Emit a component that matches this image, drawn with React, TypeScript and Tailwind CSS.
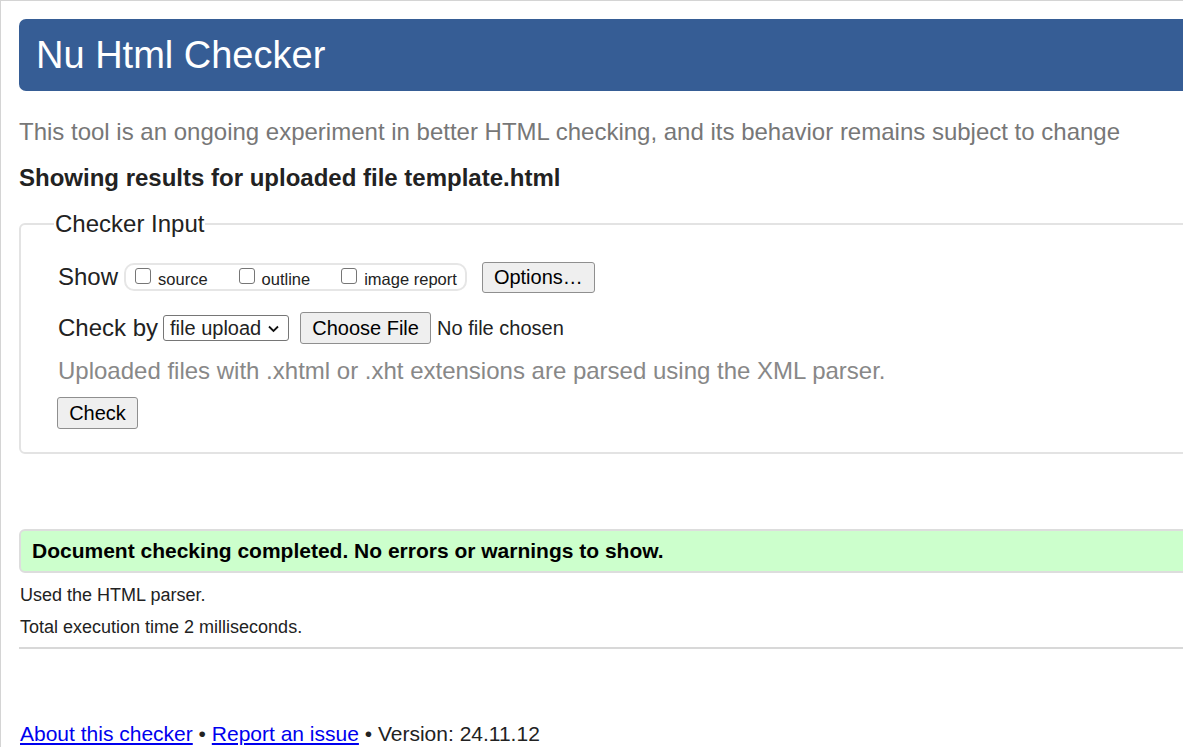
import React from "react";

function Box() {
  return (
    <span className="inline-block w-[16px] h-[16px] border border-[#767676] rounded-[3px] bg-white mr-[7px] -mt-[2px]" />
  );
}

function Btn({ children, className = "" }: { children: React.ReactNode; className?: string }) {
  return (
    <span
      className={
        "inline-flex items-center justify-center border border-[#8f8f8f] rounded-[3px] bg-[#efefef] text-black " +
        className
      }
    >
      {children}
    </span>
  );
}

export default function App() {
  return (
    <div className="w-[1183px] h-[747px] overflow-hidden bg-white border-t border-l border-[#d4d4d4] font-['Liberation_Sans',Arial,sans-serif] text-[#222]">
      <div className="w-[1260px] pl-[18px] pt-[18px]">
        {/* Header */}
        <div className="h-[72px] bg-[#365d95] rounded-[7px] flex items-center pl-[17px]">
          <h1 className="text-white text-[38px] leading-none">Nu Html Checker</h1>
        </div>

        <p className="mt-[27px] text-[24px] leading-[28px] text-[#777]">
          This tool is an ongoing experiment in better HTML checking, and its behavior remains subject to change
        </p>

        <p className="mt-[18px] text-[24px] leading-[28px] font-bold text-[#222]">
          Showing results for uploaded file template.html
        </p>

        {/* Fieldset */}
        <fieldset className="mt-[18px] border-2 border-[#e3e3e3] rounded-[6px] pb-[23px] pt-[23px] min-w-0 px-0">
          <legend className="ml-[33px] px-[1px] text-[24px] leading-[28px] text-[#222]">Checker Input</legend>

          <div className="pl-[37px]">
            <div className="flex items-center h-[32px] text-[24px]">
              <span className="mr-[6px]">Show</span>
              <span className="inline-flex items-center h-[28px] border-2 border-[#e6e6e6] rounded-[10px] pl-[9px] pr-[8px] text-[16.5px] text-[#222]">
                <span className="flex items-center mr-[31px]">
                  <Box />
                  <span className="mt-[4px]">source</span>
                </span>
                <span className="flex items-center mr-[31px]">
                  <Box />
                  <span className="mt-[4px]">outline</span>
                </span>
                <span className="flex items-center">
                  <Box />
                  <span className="mt-[4px]">image report</span>
                </span>
              </span>
              <Btn className="ml-[15px] h-[31px] w-[113px] text-[20px]">Options…</Btn>
            </div>

            <div className="flex items-center h-[32px] mt-[19px] text-[24px]">
              <span className="mr-[5px]">Check by</span>
              <span className="inline-flex items-center h-[26px] w-[126px] border border-[#767676] rounded-[3px] pl-[6px] text-[20px] bg-white">
                file upload
                <svg className="ml-[6px]" width="13" height="9" viewBox="0 0 13 9" fill="none">
                  <path d="M2 2.5l4.5 4.5 4.5-4.5" stroke="#111" strokeWidth="1.8" />
                </svg>
              </span>
              <Btn className="ml-[11px] h-[32px] w-[131px] text-[20px]">Choose File</Btn>
              <span className="ml-[6px] text-[20px]">No file chosen</span>
            </div>

            <p className="mt-[12px] text-[24px] leading-[30px] text-[#888]">
              Uploaded files with .xhtml or .xht extensions are parsed using the XML parser.
            </p>

            <div className="mt-[11px]">
              <Btn className="h-[32px] w-[81px] text-[20px] -ml-[1px]">Check</Btn>
            </div>
          </div>
        </fieldset>

        {/* Result */}
        <div className="mt-[75px] h-[44px] bg-[#ccffcc] border-2 border-[#dddddd] rounded-[6px] flex items-center pl-[11px]">
          <span className="font-bold text-[21px] text-black">Document checking completed. No errors or warnings to show.</span>
        </div>

        <p className="mt-[11px] text-[18px] leading-[22px] text-[#222] pl-px">Used the HTML parser.</p>
        <p className="mt-[10px] text-[18px] leading-[22px] text-[#222] pl-px">Total execution time 2 milliseconds.</p>

        <hr className="mt-[9px] border-0 border-t-2 border-[#d8d8d8]" />

        <footer className="mt-[73px] text-[21px] leading-[24px] text-[#222] pl-px">
          <a href="#" className="text-[#0000ee] underline">About this checker</a>
          {" • "}
          <a href="#" className="text-[#0000ee] underline">Report an issue</a>
          {" • Version: 24.11.12"}
        </footer>
      </div>
    </div>
  );
}
